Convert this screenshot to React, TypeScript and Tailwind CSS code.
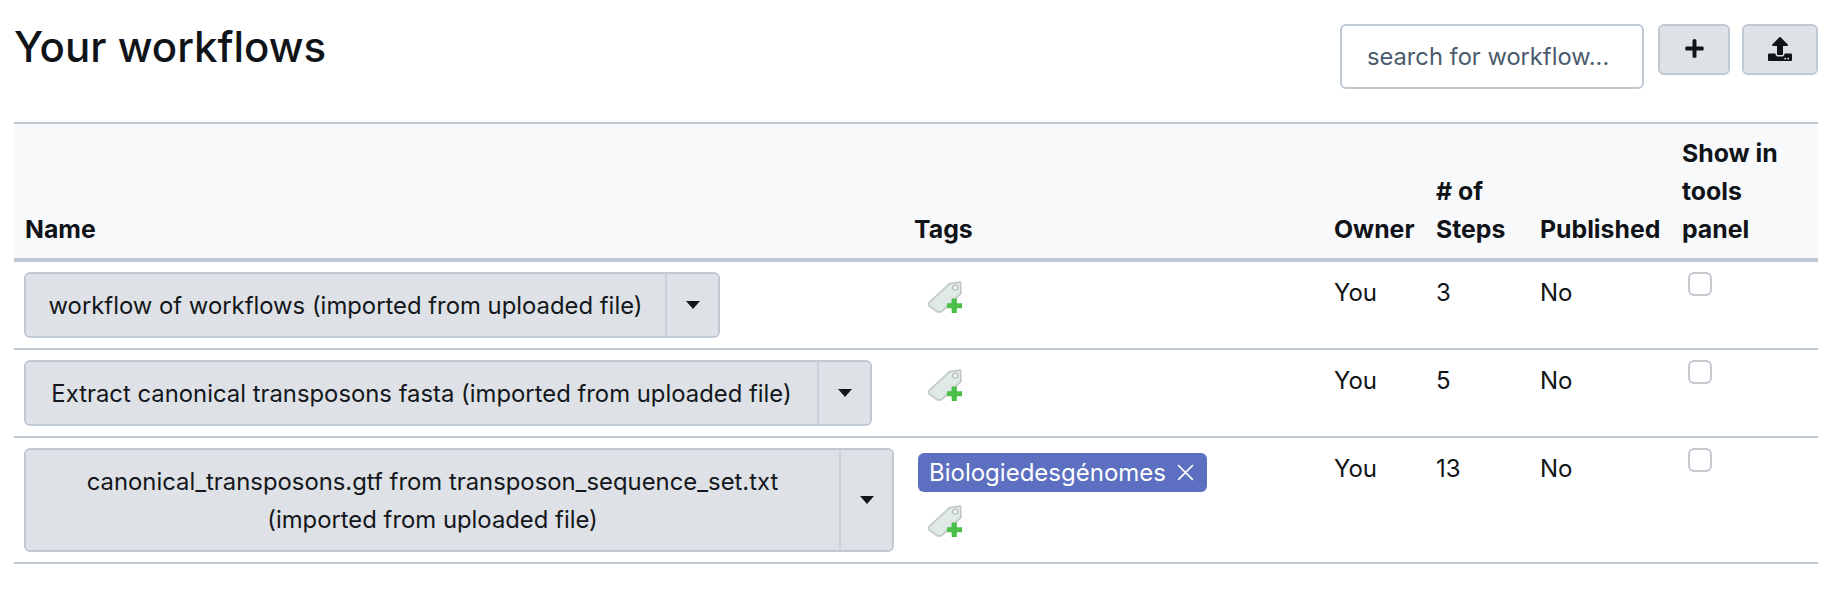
import { FaPlus, FaUpload } from "react-icons/fa";

type Workflow = {
  name: string[];
  steps: number;
  tag?: string;
  buttonWidth: string;
};

const workflows: Workflow[] = [
  { name: ["workflow of workflows (imported from uploaded file)"], steps: 3, buttonWidth: "w-[696px]" },
  { name: ["Extract canonical transposons fasta (imported from uploaded file)"], steps: 5, buttonWidth: "w-[848px]" },
  {
    name: ["canonical_transposons.gtf from transposon_sequence_set.txt", "(imported from uploaded file)"],
    steps: 13,
    tag: "Biologiedesgénomes",
    buttonWidth: "w-[870px]",
  },
];

function TagAddIcon() {
  return (
    <svg width="34" height="32" viewBox="0 0 33 31" className="block">
      <path d="M1 21 L21 2.5 L31.5 1 L32 12 L13 30 L9 30 L1 24 Z" fill="#e1e9e6" stroke="#bfcac7" strokeWidth="1.6" strokeLinejoin="round" />
      <circle cx="26.5" cy="6.5" r="2.4" fill="#f6f8f7" stroke="#a9b5b2" strokeWidth="1.1" />
      <path d="M23 17 h5 v4.5 h5 v5 h-5 v4.5 h-5 v-4.5 h-4.5 v-5 h4.5 z" fill="#4cbf48" />
    </svg>
  );
}

function WorkflowButton({ workflow }: { workflow: Workflow }) {
  return (
    <div className={`flex rounded-md border-2 border-[#bfc9d4] bg-[#dee2e6] text-[23.85px] text-[#13171b] ${workflow.buttonWidth}`}>
      <div className="flex-1 px-[16px] pt-[13px] pb-[11px] text-center leading-[38px]">
        {workflow.name.map((line) => (
          <div key={line}>{line}</div>
        ))}
      </div>
      <div className="flex w-[53px] items-center justify-center border-l-2 border-[#c9d0d9]">
        <span className="h-0 w-0 border-x-[7px] border-t-[8px] border-x-transparent border-t-[#13171b]" />
      </div>
    </div>
  );
}

export default function App() {
  return (
    <div className="h-[608px] bg-white pl-[14px] pr-[24px] text-[24px] text-[#101418] [font-family:Inter,sans-serif]">
      <div className="flex h-[122px] items-start justify-between pt-[24px]">
        <h1 className="text-[42px] leading-[46px] font-medium">Your workflows</h1>
        <div className="flex items-start">
          <input
            placeholder="search for workflow..."
            className="h-[65px] w-[304px] rounded-md border-2 border-[#bfc9d4] px-[25px] text-[23.7px] outline-none placeholder:text-[#4a5b6e]"
          />
          <button type="button" className="ml-[14px] flex h-[51px] w-[72px] items-center justify-center rounded-md border-2 border-[#bfc9d4] bg-[#dee2e6] pb-[3px]">
            <FaPlus size={21} />
          </button>
          <button type="button" className="ml-[12px] flex h-[51px] w-[76px] items-center justify-center rounded-md border-2 border-[#bfc9d4] bg-[#dee2e6] pb-[1px]">
            <FaUpload size={24} />
          </button>
        </div>
      </div>
      <table className="w-full table-fixed border-collapse">
        <thead>
          <tr className="border-t-2 border-b-4 border-[#bfc9d4] bg-[#f8f9fb] text-left align-bottom text-[24.8px] leading-[38px]">
            <th className="w-[889px] px-[11px] pt-[10px] pb-[10px] font-bold">Name</th>
            <th className="w-[420px] px-[11px] pt-[10px] pb-[10px] font-bold">Tags</th>
            <th className="w-[102px] px-[11px] pt-[10px] pb-[10px] font-bold">Owner</th>
            <th className="w-[104px] px-[11px] pt-[10px] pb-[10px] font-bold">
              # of
              <br />
              Steps
            </th>
            <th className="w-[142px] px-[11px] pt-[10px] pb-[10px] font-bold">Published</th>
            <th className="px-[11px] pt-[10px] pb-[10px] font-bold">
              Show in
              <br />
              tools
              <br />
              panel
            </th>
          </tr>
        </thead>
        <tbody>
          {workflows.map((workflow) => (
            <tr key={workflow.steps} className="border-b-2 border-[#bfc9d4] align-top">
              <td className="px-[10px] py-[10px]">
                <WorkflowButton workflow={workflow} />
              </td>
              <td className="px-[11px] py-[10px]">
                {workflow.tag && (
                  <span className="mt-[5px] ml-[4px] mb-[13px] inline-flex h-[39px] items-center gap-[10px] rounded-md bg-[#5c6fc0] px-[11px] pr-[12px] text-white">
                    {workflow.tag}
                    <svg width="19" height="19" viewBox="0 0 18 18" stroke="currentColor" strokeWidth="1.5">
                      <path d="M2 2 L16 16 M16 2 L2 16" />
                    </svg>
                  </span>
                )}
                <div className={workflow.tag ? "pl-[14px]" : "pl-[14px] pt-[9px]"}>
                  <TagAddIcon />
                </div>
              </td>
              <td className="px-[11px] pt-[12px] pb-[10px] leading-[37px]">You</td>
              <td className="px-[11px] pt-[12px] pb-[10px] leading-[37px]">{workflow.steps}</td>
              <td className="px-[11px] pt-[12px] pb-[10px] leading-[37px]">No</td>
              <td className="px-[11px] py-[10px]">
                <input type="checkbox" className="ml-[6px] block size-[24px] appearance-none rounded-md border-2 border-[#c4c9cf] bg-white" />
              </td>
            </tr>
          ))}
        </tbody>
      </table>
    </div>
  );
}
